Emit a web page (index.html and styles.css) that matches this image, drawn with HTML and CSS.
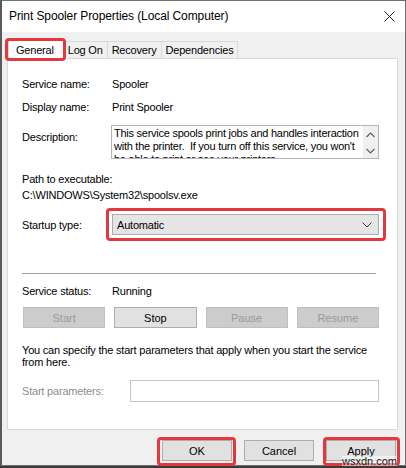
FILE: index.html
```html
<!DOCTYPE html>
<html>
<head>
<meta charset="utf-8">
<title>Print Spooler Properties</title>
<link rel="stylesheet" href="styles.css">
</head>
<body>
<div class="window">
  <div class="titlebar">
    <span class="title">Print Spooler Properties (Local Computer)</span>
    <svg class="close" width="11" height="11" viewBox="0 0 11 11"><path d="M0.5 0.5 L10.5 10.5 M10.5 0.5 L0.5 10.5" stroke="#1a1a1a" stroke-width="1"/></svg>
  </div>
  <div class="client">
    <div class="tabs">
      <div class="tab selected mark">General</div>
      <div class="tab">Log On</div>
      <div class="tab">Recovery</div>
      <div class="tab">Dependencies</div>
    </div>
    <div class="panel">
      <div class="row r-name"><span class="label">Service name:</span><span>Spooler</span></div>
      <div class="row r-display"><span class="label">Display name:</span><span>Print Spooler</span></div>
      <div class="row r-desc">
        <span class="label desc-label">Description:</span>
        <div class="textbox">
          <div class="desc-text">This service spools print jobs and handles interaction with the printer.&nbsp; If you turn off this service, you won't be able to print or see your printers.</div>
          <div class="scroll">
            <svg width="9" height="6" viewBox="0 0 9 6"><path d="M0.5 5 L4.5 1 L8.5 5" fill="none" stroke="#606060" stroke-width="1.2"/></svg>
            <svg width="9" height="6" viewBox="0 0 9 6"><path d="M0.5 1 L4.5 5 L8.5 1" fill="none" stroke="#606060" stroke-width="1.2"/></svg>
          </div>
        </div>
      </div>
      <div class="line r-path">Path to executable:</div>
      <div class="line r-exe">C:\WINDOWS\System32\spoolsv.exe</div>
      <div class="row r-startup">
        <span class="label">Startup type:</span>
        <div class="combo mark">
          <span>Automatic</span>
          <svg width="10" height="6" viewBox="0 0 10 6"><path d="M0.5 0.5 L5 5 L9.5 0.5" fill="none" stroke="#404040" stroke-width="1"/></svg>
        </div>
      </div>
      <div class="separator"></div>
      <div class="row r-status"><span class="label">Service status:</span><span>Running</span></div>
      <div class="buttons">
        <div class="btn disabled">Start</div>
        <div class="btn">Stop</div>
        <div class="btn disabled">Pause</div>
        <div class="btn disabled">Resume</div>
      </div>
      <div class="info">You can specify the start parameters that apply when you start the service from here.</div>
      <div class="row r-params">
        <span class="label params-label">Start parameters:</span>
        <div class="input"></div>
      </div>
    </div>
    <div class="footer">
      <div class="btn dlg mark">OK</div>
      <div class="btn dlg">Cancel</div>
      <div class="btn dlg mark apply">Apply</div>
    </div>
  </div>
  <span class="watermark">wsxdn.com</span>
</div>
</body>
</html>
```

FILE: styles.css
```css
html, body {
  margin: 0;
  padding: 0;
  background: #3a3a3a;
}

body {
  width: 406px;
  height: 468px;
  overflow: hidden;
  font-family: "Liberation Sans", Arial, sans-serif;
  font-size: 11px;
  letter-spacing: -0.2px;
  color: #000;
}

.window {
  position: relative;
  width: 406px;
  height: 466px;
  box-sizing: border-box;
  border: 1px solid #707070;
  border-left: 2px solid #5a5a5a;
  background: #f0f0f0;
  display: flex;
  flex-direction: column;
}

.titlebar {
  height: 30px;
  background: #fff;
  display: flex;
  align-items: center;
  justify-content: space-between;
  padding: 0 10px 1px 7px;
}

.title {
  font-size: 12px;
  letter-spacing: -0.1px;
  color: #000;
}

.close {
  display: block;
}

.client {
  flex: 1;
  padding: 0 7px 0 5px;
}

/* tab strip */
.tabs {
  height: 26px;
  display: flex;
  align-items: flex-end;
  padding-left: 1px;
}

.tab {
  position: relative;
  height: 17px;
  box-sizing: border-box;
  padding: 0 4px 0 4px;
  border: 1px solid #d9d9d9;
  border-bottom: none;
  border-left: none;
  line-height: 17px;
  background: #f0f0f0;
}

.tab.selected {
  height: 20px;
  margin-bottom: -1px;
  background: #fff;
  border-left: 1px solid #d9d9d9;
  padding: 0 9px 0 7px;
  line-height: 20px;
  z-index: 1;
}

/* red highlight frames drawn over controls */
.mark {
  position: relative;
}

.mark::after {
  content: "";
  position: absolute;
  border: 3px solid #e2383e;
  border-radius: 4px;
  pointer-events: none;
}

.tab.mark::after {
  left: -4px;
  right: -3px;
  top: -2px;
  bottom: -2px;
}

.combo.mark::after {
  left: -7px;
  right: -8px;
  top: -7px;
  bottom: -7px;
}

.btn.dlg.mark::after {
  left: -6px;
  right: -5px;
  top: -4px;
  bottom: -6px;
}

.btn.apply.mark::after {
  left: -4px;
  right: -5px;
}

/* tab page */
.panel {
  height: 372px;
  box-sizing: border-box;
  background: #fff;
  border: 1px solid #d9d9d9;
  padding: 18px 18px 0 14px;
}

.row {
  display: flex;
  align-items: center;
}

.label {
  width: 90px;
  flex: none;
}

.r-name, .r-display, .r-status {
  height: 13px;
}

.r-display { margin-top: 10px; }

.r-desc {
  margin-top: 12px;
  height: 34px;
  align-items: flex-start;
}

.desc-label {
  padding-top: 6px;
  width: 89px;
}

.textbox {
  flex: 1;
  height: 34px;
  box-sizing: border-box;
  border: 1px solid #b4b4b4;
  display: flex;
  overflow: hidden;
}

.desc-text {
  flex: 1;
  padding: 1px 2px 0 2px;
  line-height: 13px;
  letter-spacing: -0.25px;
}

.scroll {
  width: 15px;
  flex: none;
  background: #f0f0f0;
  display: flex;
  flex-direction: column;
  align-items: center;
  justify-content: space-between;
  padding: 6px 0 4px;
  box-sizing: border-box;
}

.scroll svg { display: block; }

.line {
  height: 13px;
  line-height: 13px;
}

.r-path { margin-top: 14px; }
.r-exe { margin-top: 3px; }

.r-startup {
  margin-top: 12px;
  height: 21px;
}

.combo {
  flex: 1;
  height: 21px;
  box-sizing: border-box;
  border: 1px solid #adadad;
  background: #e5e5e5;
  display: flex;
  align-items: center;
  justify-content: space-between;
  padding: 0 6px 0 4px;
}

.combo svg { display: block; }

.separator {
  margin-top: 38px;
  height: 1px;
  background: #a0a0a0;
  margin-right: 3px;
}

.r-status { margin-top: 10px; }

.buttons {
  margin-top: 10px;
  display: grid;
  grid-template-columns: repeat(4, 1fr);
  gap: 9px;
  padding-left: 1px;
}

.btn {
  height: 21px;
  box-sizing: border-box;
  border: 1px solid #adadad;
  background: #e1e1e1;
  display: flex;
  align-items: center;
  justify-content: center;
  letter-spacing: 0;
}

.btn.disabled {
  background: #cccccc;
  border-color: #bfbfbf;
  color: #9a9a9a;
}

.info {
  margin-top: 16px;
  line-height: 12px;
  width: 350px;
}

.r-params {
  margin-top: 12px;
  height: 22px;
}

.params-label {
  width: 108px;
  color: #8d8d8d;
}

.input {
  flex: 1;
  height: 22px;
  box-sizing: border-box;
  border: 1px solid #c4c4c4;
}

/* dialog buttons */
.footer {
  display: flex;
  justify-content: flex-end;
  gap: 12px;
  padding: 10px 2px 0 0;
}

.btn.dlg {
  width: 70px;
}

.watermark {
  position: absolute;
  right: 8px;
  bottom: -1px;
  font-size: 11px;
  letter-spacing: 0;
  color: #1a1a1a;
  background: rgba(255,255,255,0.5);
  line-height: 10px;
}
```
